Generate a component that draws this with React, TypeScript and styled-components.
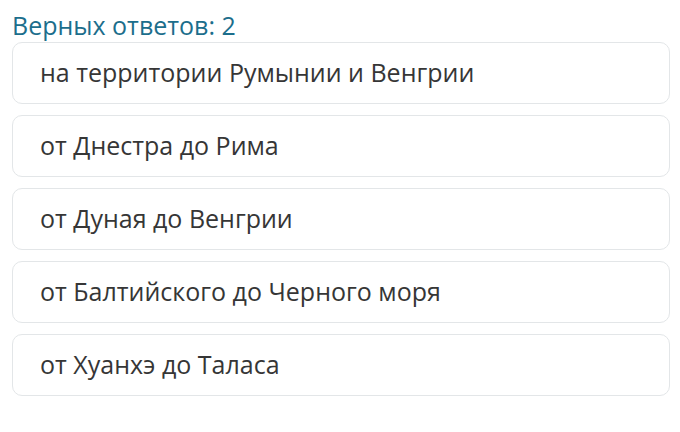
import React from "react";
import styled, { createGlobalStyle } from "styled-components";

const GlobalStyle = createGlobalStyle`
  body {
    margin: 0;
    background: #ffffff;
    font-family: 'Open Sans', 'Liberation Sans', sans-serif;
  }
`;

const Wrapper = styled.div`
  width: 680px;
  height: 432px;
  padding: 8px 10px 0 12px;
  box-sizing: border-box;
  display: flex;
  flex-direction: column;
`;

const Title = styled.div`
  font-size: 25px;
  line-height: 34px;
  color: #1c6e8c;
  height: 34px;
`;

const AnswerList = styled.div`
  display: flex;
  flex-direction: column;
  gap: 11px;
`;

const Answer = styled.div`
  height: 62px;
  box-sizing: border-box;
  border: 1px solid #e3e6e8;
  border-radius: 10px;
  background: #ffffff;
  display: flex;
  align-items: center;
  padding-left: 27px;
  padding-bottom: 2px;
  font-size: 25px;
  color: #363636;
`;

const answers = [
  "на территории Румынии и Венгрии",
  "от Днестра до Рима",
  "от Дуная до Венгрии",
  "от Балтийского до Черного моря",
  "от Хуанхэ до Таласа",
];

const App: React.FC = () => (
  <>
    <GlobalStyle />
    <Wrapper>
      <Title>Верных ответов: 2</Title>
      <AnswerList>
        {answers.map((a) => (
          <Answer key={a}>{a}</Answer>
        ))}
      </AnswerList>
    </Wrapper>
  </>
);

export default App;
